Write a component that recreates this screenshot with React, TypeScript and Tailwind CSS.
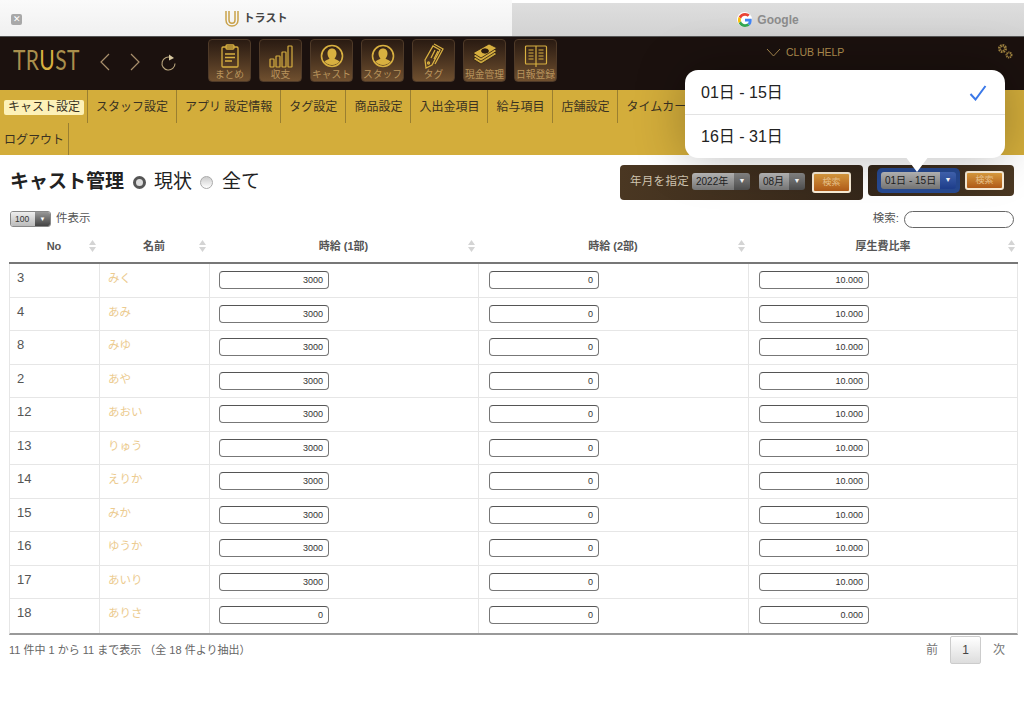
import React, { FC, ReactNode } from "react";

const jp = "font-['Liberation_Sans','Noto_Sans_CJK_JP',sans-serif]";

const navItems = ["スタッフ設定", "アプリ 設定情報", "タグ設定", "商品設定", "入出金項目", "給与項目", "店舗設定"];

const rows = [
	["3", "みく", "3000", "0", "10.000"],
	["4", "あみ", "3000", "0", "10.000"],
	["8", "みゆ", "3000", "0", "10.000"],
	["2", "あや", "3000", "0", "10.000"],
	["12", "あおい", "3000", "0", "10.000"],
	["13", "りゅう", "3000", "0", "10.000"],
	["14", "えりか", "3000", "0", "10.000"],
	["15", "みか", "3000", "0", "10.000"],
	["16", "ゆうか", "3000", "0", "10.000"],
	["17", "あいり", "3000", "0", "10.000"],
	["18", "ありさ", "0", "0", "0.000"],
];

const gold = "#d8b040";

const ClipboardIcon = () => (
	<svg width="20" height="24" viewBox="0 0 20 24" fill="none" stroke={gold} strokeWidth="1.3">
		<rect x="2" y="3" width="16" height="20" rx="1" />
		<rect x="6" y="1" width="8" height="4" rx="1" />
		<path d="M5 10h10M5 13.500h10M5 17h7" />
	</svg>
);
const BarsIcon = () => (
	<svg width="24" height="24" viewBox="0 0 24 24" fill="none" stroke={gold} strokeWidth="1.2">
		<rect x="1" y="15" width="4" height="8" rx="0.5" />
		<rect x="7" y="12" width="4" height="11" rx="0.5" />
		<rect x="13" y="8" width="4" height="15" rx="0.5" />
		<rect x="19" y="2" width="4" height="21" rx="0.5" />
	</svg>
);
const PersonIcon = () => (
	<svg width="24" height="24" viewBox="0 0 24 24">
		<circle cx="12" cy="12" r="10.500" fill="none" stroke={gold} strokeWidth="1.6" />
		<path d="M12 4.500c3 0 4.500 2.300 4.500 5 0 2.200-.8 3.800-2 5 1 1 3.200 1.300 5 3-1.700 2-4.300 3.500-7.500 3.500s-5.800-1.500-7.500-3.500c1.800-1.700 4-2 5-3-1.200-1.200-2-2.800-2-5 0-2.700 1.500-5 4.500-5z" fill={gold} />
	</svg>
);
const TagIcon = () => (
	<svg width="24" height="26" viewBox="0 0 24 26" fill="none" stroke={gold} strokeWidth="1.3">
		<path d="M3 17 11 3l7 4-8 15-6 3z" />
		<path d="M12 1l9 5-8 15" />
		<path d="M9 15l4-8M12 16l4-8" />
		<circle cx="6.500" cy="20" r="1" />
	</svg>
);
const MoneyIcon = () => (
	<svg width="26" height="24" viewBox="0 0 26 24" stroke="#2a1b10" strokeWidth="0.8">
		<path d="M1 15 17 5l8 5-16 10z" fill="#c9a63e" />
		<path d="M1 12 17 2l8 5-16 10z" fill="#d8b040" />
		<path d="M1 9 17 0l8 4-16 10z" fill={gold} />
		<ellipse cx="13" cy="7" rx="3.500" ry="2.200" fill="#2a1b10" />
	</svg>
);
const BookIcon = () => (
	<svg width="24" height="24" viewBox="0 0 24 24" fill="none" stroke={gold} strokeWidth="1.2">
		<rect x="1.500" y="2" width="21" height="18" rx="1" />
		<path d="M12 2v21M4.500 6h5M4.500 9h5M4.500 12h5M4.500 15h5M14.500 6h5M14.500 9h5M14.500 12h5M14.500 15h5" />
	</svg>
);

const tools: [ReactNode, string][] = [
	[<ClipboardIcon />, "まとめ"],
	[<BarsIcon />, "収支"],
	[<PersonIcon />, "キャスト"],
	[<PersonIcon />, "スタッフ"],
	[<TagIcon />, "タグ"],
	[<MoneyIcon />, "現金管理"],
	[<BookIcon />, "日報登録"],
];

const ToolButton: FC<{ icon: ReactNode; label: string }> = ({ icon, label }) => (
	<div className="w-[43px] h-[43px] rounded-[4px] border border-[#4f3a28] bg-gradient-to-b from-[#2a1b12] to-[#70502f] flex flex-col items-center pt-[3px] overflow-hidden">
		<div className="h-[26px] flex items-center">{icon}</div>
		<div className="text-[9.750px] leading-[12px] text-[#b8935c] whitespace-nowrap">{label}</div>
	</div>
);

const Select: FC<{ label: string; className: string; arrow?: string }> = ({ label, className, arrow = "from-[#8a8a8a] to-[#4f4f4f]" }) => (
	<div className={`flex h-[17px] rounded-[3px] overflow-hidden ${className}`}>
		<div className="flex-1 bg-gradient-to-b from-[#bdbdbd] to-[#777] text-[10px] leading-[17px] text-[#222] pl-[4px] whitespace-nowrap">{label}</div>
		<div className={`w-[16px] bg-gradient-to-b ${arrow} flex items-center justify-center text-[7px] text-white`}>▼</div>
	</div>
);

const SearchButton: FC<{ className?: string }> = ({ className = "" }) => (
	<div className={`w-[39px] rounded-[3px] border-2 border-[#fbeed8] bg-gradient-to-b from-[#e0a040] to-[#b25c18] text-[9px] text-[#f0c890] flex items-center justify-center ${className}`}>
		検索
	</div>
);

const SortArrows = () => (
	<svg className="absolute right-[3px] top-[6px]" width="7" height="12" viewBox="0 0 7 12" fill="#d4d4d4">
		<path d="M3.500 0 7 5H0zM0 7h7l-3.500 5z" />
	</svg>
);

const ValueBox: FC<{ value: string }> = ({ value }) => (
	<div className="w-[110px] h-[18px] rounded-[4px] border border-[#777] border-t-[#555] bg-white text-right pr-[5px] text-[9px] leading-[17px] text-[#333]">
		{value}
	</div>
);

const HeadCell: FC<{ label: string }> = ({ label }) => (
	<div className="relative flex items-center justify-center h-[24px] text-[11px] font-bold text-[#555]">
		{label}
		<SortArrows />
	</div>
);

const GoogleIcon = () => (
	<svg width="14" height="14" viewBox="0 0 48 48">
		<path fill="#EA4335" d="M24 9.500c3.500 0 6.700 1.200 9.200 3.600l6.900-6.900C35.900 2.400 30.500 0 24 0 14.600 0 6.500 5.400 2.600 13.200l8 6.200C12.500 13.700 17.800 9.500 24 9.500z" />
		<path fill="#4285F4" d="M47 24.500c0-1.600-.1-3.100-.4-4.500H24v9h12.900c-.6 3-2.200 5.500-4.700 7.200l7.700 6C44.400 38 47 31.800 47 24.500z" />
		<path fill="#FBBC05" d="M10.500 28.600c-.5-1.400-.8-3-.8-4.600s.3-3.200.8-4.600l-8-6.200C.9 16.500 0 20.100 0 24s.9 7.500 2.600 10.800l7.900-6.200z" />
		<path fill="#34A853" d="M24 48c6.500 0 11.900-2.100 15.900-5.800l-7.700-6c-2.200 1.400-4.900 2.300-8.200 2.300-6.200 0-11.500-4.200-13.400-9.900l-8 6.200C6.500 42.600 14.600 48 24 48z" />
	</svg>
);

const App: FC = () => {
	return (
		<div className={`relative w-[1024px] h-[701px] overflow-hidden bg-white ${jp}`}>
			{/* tabs */}
			<div className="flex h-9">
				<div className="w-[512px] bg-gradient-to-b from-[#fafafa] to-[#f0f0f0] relative flex items-center justify-center gap-[5px]">
					<div className="absolute left-[11px] top-[14px] w-[11px] h-[11px] rounded-[2px] bg-[#a8a8a8] text-white text-[9px] leading-[11px] text-center">✕</div>
					<svg width="14" height="17" viewBox="0 0 14 17" fill="none" stroke="#c9a24a" strokeWidth="1.500">
						<path d="M1 1v9c0 3.500 2.500 6 6 6s6-2.500 6-6V1" />
						<path d="M4 1v9c0 2 1.200 3.300 3 3.300s3-1.300 3-3.300V1" />
					</svg>
					<span className="text-[11px] font-bold text-[#444]">トラスト</span>
				</div>
				<div className="w-[512px] mt-[3px] bg-gradient-to-b from-[#dedede] to-[#d2d2d2] flex items-center justify-center gap-[5px]">
					<div className="w-[15px] h-[15px] rounded-full bg-white flex items-center justify-center"><GoogleIcon /></div>
					<span className="text-[12px] font-bold text-[#8c8c8c]">Google</span>
				</div>
			</div>

			{/* toolbar */}
			<div className="h-[54px] bg-[#1b110e] border-t border-[#555] flex items-start relative">
				<div className="ml-[13px] mt-[7px] w-[69px] text-[27px] leading-[32px] font-['Lato',sans-serif] tracking-[0.5px] text-[#a98f4c] whitespace-nowrap origin-left scale-x-[0.78]">
					TR<span className="text-[#d8b040]">U</span>ST
				</div>
				<svg className="ml-[17px] mt-[15px]" width="12" height="20" viewBox="0 0 12 20" fill="none" stroke="#a98f6c" strokeWidth="1.200"><path d="M10 2 2 10l8 8" /></svg>
				<svg className="ml-[18px] mt-[15px]" width="12" height="20" viewBox="0 0 12 20" fill="none" stroke="#a98f6c" strokeWidth="1.200"><path d="m2 2 8 8-8 8" /></svg>
				<svg className="ml-[19px] mt-[15px]" width="17" height="20" viewBox="0 0 17 20" fill="none" stroke="#b8a57c" strokeWidth="1.100"><path d="M11 5.500a6.500 6.500 0 1 0 4 6" /><path d="M9 2.500 14 6l-5 2.500z" fill="#d8c9a0" stroke="none" /></svg>
				<div className="ml-[31px] mt-[2px] flex gap-2">
					{tools.map(([icon, label]) => (
						<ToolButton key={label} icon={icon} label={label} />
					))}
				</div>
				<svg className="ml-[209px] mt-[11px]" width="15" height="9" viewBox="0 0 15 9" fill="none" stroke="#a98a50" strokeWidth="1"><path d="m1 1 6.500 7L14 1" /></svg>
				<div className="ml-[5px] mt-[8px] text-[10.500px] leading-[14px] text-[#b08f50] whitespace-nowrap">CLUB HELP</div>
				<svg className="ml-[152px] mt-[5px]" width="17" height="17" viewBox="0 0 17 17" fill="none" stroke="#a08440" strokeWidth="1.300">
					<circle cx="6.500" cy="6.500" r="3" strokeDasharray="1.500 0.800" strokeWidth="3" />
					<circle cx="13" cy="13" r="2.500" strokeDasharray="1.200 0.600" strokeWidth="2" />
				</svg>
			</div>

			{/* nav */}
			<div className="h-[65px] bg-[#d3ad3b] flex flex-wrap content-start text-[12px] text-[#3a3222]">
				<div className="h-[33px] w-[88px] border-r border-[#9a7f30] flex items-start pt-[10px]">
					<span className="ml-[4px] w-[80px] h-[15px] leading-[15px] rounded-[2px] bg-[#fdf1b8] text-center">キャスト設定</span>
				</div>
				{navItems.map((item) => (
					<div key={item} className="h-[33px] px-[8px] pt-[9px] leading-[16px] border-r border-[#9a7f30] whitespace-nowrap">
						{item}
					</div>
				))}
				<div className="h-[33px] pl-[8px] pt-[9px] leading-[16px] whitespace-nowrap">タイムカード</div>
				<div className="basis-full h-0" />
				<div className="h-[32px] w-[69px] pl-[4px] pt-[9px] leading-[16px] border-r border-[#9a7f30]">ログアウト</div>
			</div>

			{/* title + filter panels */}
			<div className="flex items-start pt-[10px] pl-[10px] h-[52px]">
				<div className="flex items-center h-[34px] text-[#222]">
					<h1 className="text-[19px] font-bold mr-[9px]">キャスト管理</h1>
					<span className="w-[13px] h-[13px] rounded-full border-[3.500px] border-[#555] bg-[#ddd]" />
					<span className="text-[19px] ml-[8px]">現状</span>
					<span className="ml-[8px] w-[13px] h-[13px] rounded-full border border-[#aaa] bg-gradient-to-b from-[#ccc] to-white" />
					<span className="text-[19px] ml-[9px]">全て</span>
				</div>
				<div className="ml-auto mr-[10px] flex gap-[5px]">
					<div className="w-[243px] h-[35px] rounded-[4px] bg-gradient-to-r from-[#4a3722] to-[#35271a] flex items-start pl-[10px] pt-[8px]">
						<span className="text-[11.500px] leading-[17px] text-[#cfc4b0] tracking-[0.3px] whitespace-nowrap">年月を指定</span>
						<Select label="2022年" className="ml-[3px] w-[58px]" />
						<Select label="08月" className="ml-[9px] w-[46px]" />
						<SearchButton className="ml-[7px] h-[21px] -mt-[1px]" />
					</div>
					<div className="w-[146px] h-[31px] rounded-[4px] bg-gradient-to-r from-[#33261a] to-[#4a3722] flex items-start pl-[9px] pt-[3px]">
						<div className="w-[83px] h-[25px] rounded-[5px] bg-[#274a92] p-[4px]">
							<Select label="01日 - 15日" className="w-full" arrow="from-[#4468b8] to-[#1f3f8e]" />
						</div>
						<SearchButton className="ml-[5px] h-[19px] mt-[3px]" />
					</div>
				</div>
			</div>

			{/* length + search */}
			<div className="flex items-center h-[24px] px-[10px] text-[11.500px] text-[#555]">
				<div className="flex w-[41px] h-[16px] rounded-[3px] overflow-hidden border border-[#888]">
					<div className="flex-1 bg-gradient-to-b from-[#eee] to-[#bbb] text-[8.500px] leading-[14px] text-[#333] pl-[4px]">100</div>
					<div className="w-[15px] bg-gradient-to-b from-[#999] to-[#444] text-white text-[6px] leading-[14px] text-center">▼</div>
				</div>
				<span className="ml-[5px]">件表示</span>
				<span className="ml-auto">検索:</span>
				<div className="ml-[5px] w-[110px] h-[17px] rounded-full border border-[#666] bg-white" />
			</div>

			{/* table */}
			<div className="mx-[9px] w-[1009px] mt-[3px]">
				<div className="grid grid-cols-[90px_110px_269px_270px_270px] h-[30px] pb-[4px] border-b-2 border-[#777]">
					<HeadCell label="No" />
					<HeadCell label="名前" />
					<HeadCell label="時給 (1部)" />
					<HeadCell label="時給 (2部)" />
					<HeadCell label="厚生費比率" />
				</div>
				<div className="border-b-2 border-[#999] border-x border-x-[#e6e6e6]">
					{rows.map(([no, name, a, b, c], i) => (
						<div key={no} className={`grid grid-cols-[90px_110px_269px_270px_270px] h-[33.500px] ${i < rows.length - 1 ? "border-b border-[#e6e6e6]" : ""}`}>
							<div className="pl-[7px] pt-[4px] text-[13px] leading-[20px] text-[#555] border-r border-[#e6e6e6]">{no}</div>
							<div className="pl-[8px] pt-[4px] text-[11.500px] leading-[20px] text-[#eccb8f] border-r border-[#e6e6e6]">{name}</div>
							<div className="pl-[9px] pt-[7px] border-r border-[#e6e6e6]"><ValueBox value={a} /></div>
							<div className="pl-[10px] pt-[7px] border-r border-[#e6e6e6]"><ValueBox value={b} /></div>
							<div className="pl-[10px] pt-[7px]"><ValueBox value={c} /></div>
						</div>
					))}
				</div>
				<div className="flex items-start h-[32px]">
					<span className="pt-[7px] text-[11px] leading-[16px] text-[#666]">11 件中 1 から 11 まで表示 （全 18 件より抽出）</span>
					<div className="ml-auto mr-[13px] flex items-start text-[12px] text-[#777]">
						<span className="pt-[7px] leading-[16px]">前</span>
						<span className="ml-[12px] mt-[1px] w-[31px] h-[28px] rounded-[2px] border border-[#ccc] bg-gradient-to-b from-white to-[#ddd] text-center leading-[26px] text-[#444]">1</span>
						<span className="ml-[12px] pt-[7px] leading-[16px]">次</span>
					</div>
				</div>
			</div>

			{/* popover over the date select */}
			<div className="absolute left-[685px] top-[70px] w-[320px] h-[88px] rounded-[13px] bg-white shadow-[0_0_50px_rgba(0,0,0,0.28)] text-[16px] text-[#222]">
				<div className="h-[45px] flex items-center justify-between pt-[1px] pl-[16px] pr-[18px] border-b border-[#e3e3e3]">
					<span>01日 - 15日</span>
					<svg width="18" height="16" viewBox="0 0 18 16" fill="none" stroke="#3a78e8" strokeWidth="2">
						<path d="m1.500 9 5 5.500L16.500 1" />
					</svg>
				</div>
				<div className="h-[43px] flex items-center pl-[16px]">16日 - 31日</div>
				<div className="absolute left-[220px] top-[86px] w-0 h-0 border-x-[12px] border-x-transparent border-t-[16px] border-t-white" />
			</div>
		</div>
	);
};

export default App;
